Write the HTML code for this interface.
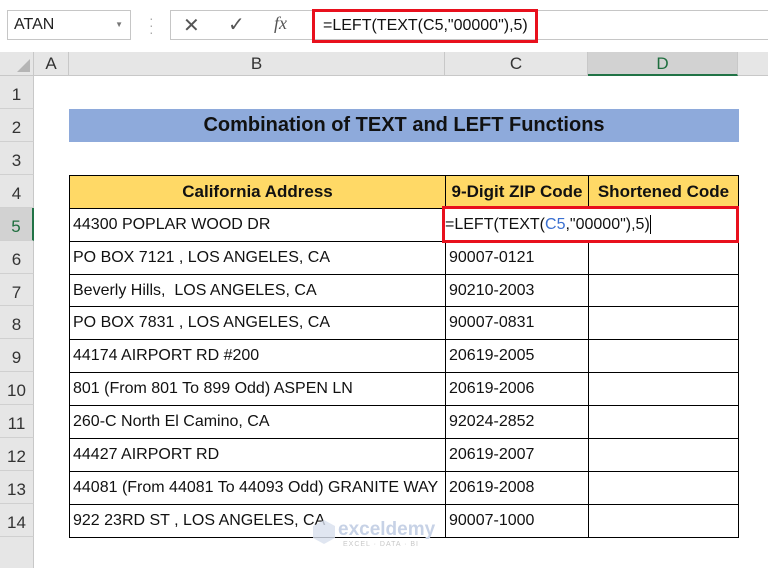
<!DOCTYPE html>
<html><head><meta charset="utf-8"><style>
*{margin:0;padding:0;box-sizing:border-box}
body{width:768px;height:568px;overflow:hidden;background:#fff;font-family:"Liberation Sans",sans-serif;position:relative}
.a{position:absolute}
.rh{position:absolute;left:0;width:34px;background:#e6e6e6;border-bottom:1px solid #d0d0d0;border-right:1px solid #c8c8c8;font-size:17px;color:#333;text-align:center;padding-top:9px}
.ch{position:absolute;top:52px;height:24px;background:#e6e6e6;border-right:1px solid #c8c8c8;border-bottom:1px solid #c8c8c8;font-size:17px;color:#333;text-align:center;line-height:24px}
.cell{position:absolute;border:1px solid #000;font-size:16px;color:#111;padding-left:3px;display:flex;align-items:center;white-space:nowrap}
.hd{font-weight:bold;justify-content:center;padding-left:0;background:#ffd966;font-size:17px}
</style></head><body>
<div class="a" style="left:7px;top:10px;width:124px;height:30px;border:1px solid #c6c6c6;font-size:16px;line-height:28px;padding-left:6px;color:#222">ATAN<span style="position:absolute;right:7px;top:0;font-size:8px;color:#777">▼</span></div>
<div class="a" style="left:149px;top:15px;color:#aaa;font-size:14px;line-height:7px">·<br>·<br>·</div>
<div class="a" style="left:170px;top:10px;width:598px;height:30px;border:1px solid #c6c6c6;border-right:none"></div>
<div class="a" style="left:183px;top:13px;font-size:20px;color:#555">✕</div>
<div class="a" style="left:228px;top:12px;font-size:20px;color:#555">✓</div>
<div class="a" style="left:274px;top:13px;font-size:18px;color:#555;font-style:italic;font-family:'Liberation Serif',serif">fx</div>
<div class="a" style="left:312px;top:9px;width:226px;height:34px;border:3px solid #e8101d;font-size:16px;line-height:28px;padding-left:8px;color:#111">=LEFT(TEXT(C5,"00000"),5)</div>
<div class="ch" style="left:0;width:34px"><div style="position:absolute;right:3px;bottom:3px;width:0;height:0;border-left:13px solid transparent;border-bottom:13px solid #b5b5b5"></div></div>
<div class="ch" style="left:34px;width:35px">A</div>
<div class="ch" style="left:69px;width:376px">B</div>
<div class="ch" style="left:445px;width:143px">C</div>
<div class="ch" style="left:588px;width:150px;background:#d2d2d2;color:#1e6e3e;border-bottom:2px solid #217346">D</div>
<div class="ch" style="left:738px;width:30px;border-right:none"></div>
<div class="rh" style="top:76px;height:33px">1</div>
<div class="rh" style="top:109px;height:33px">2</div>
<div class="rh" style="top:142px;height:33px">3</div>
<div class="rh" style="top:175px;height:33px">4</div>
<div class="rh" style="top:208px;height:33px;background:#d2d2d2;color:#1e6e3e;border-right:2px solid #217346">5</div>
<div class="rh" style="top:241px;height:33px">6</div>
<div class="rh" style="top:274px;height:32px">7</div>
<div class="rh" style="top:306px;height:33px">8</div>
<div class="rh" style="top:339px;height:33px">9</div>
<div class="rh" style="top:372px;height:33px">10</div>
<div class="rh" style="top:405px;height:33px">11</div>
<div class="rh" style="top:438px;height:33px">12</div>
<div class="rh" style="top:471px;height:33px">13</div>
<div class="rh" style="top:504px;height:33px">14</div>
<div class="rh" style="top:537px;height:31px;border-bottom:none"></div>
<div class="a" style="left:69px;top:109px;width:670px;height:33px;background:#8eaadb;font-weight:bold;font-size:20px;text-align:center;line-height:33px;color:#111">Combination of TEXT and LEFT Functions</div>
<div class="cell hd" style="left:69px;top:175px;width:377px;height:34px">California Address</div>
<div class="cell hd" style="left:445px;top:175px;width:144px;height:34px">9-Digit ZIP Code</div>
<div class="cell hd" style="left:588px;top:175px;width:151px;height:34px">Shortened Code</div>
<div class="cell" style="left:69px;top:208px;width:377px;height:34px">44300 POPLAR WOOD DR</div>
<div class="cell" style="left:445px;top:208px;width:144px;height:34px"></div>
<div class="cell" style="left:588px;top:208px;width:151px;height:34px"></div>
<div class="cell" style="left:69px;top:241px;width:377px;height:34px">PO BOX 7121 , LOS ANGELES, CA</div>
<div class="cell" style="left:445px;top:241px;width:144px;height:34px">90007-0121</div>
<div class="cell" style="left:588px;top:241px;width:151px;height:34px"></div>
<div class="cell" style="left:69px;top:274px;width:377px;height:33px">Beverly Hills,&nbsp; LOS ANGELES, CA</div>
<div class="cell" style="left:445px;top:274px;width:144px;height:33px">90210-2003</div>
<div class="cell" style="left:588px;top:274px;width:151px;height:33px"></div>
<div class="cell" style="left:69px;top:306px;width:377px;height:34px">PO BOX 7831 , LOS ANGELES, CA</div>
<div class="cell" style="left:445px;top:306px;width:144px;height:34px">90007-0831</div>
<div class="cell" style="left:588px;top:306px;width:151px;height:34px"></div>
<div class="cell" style="left:69px;top:339px;width:377px;height:34px">44174 AIRPORT RD #200</div>
<div class="cell" style="left:445px;top:339px;width:144px;height:34px">20619-2005</div>
<div class="cell" style="left:588px;top:339px;width:151px;height:34px"></div>
<div class="cell" style="left:69px;top:372px;width:377px;height:34px">801 (From 801 To 899 Odd) ASPEN LN</div>
<div class="cell" style="left:445px;top:372px;width:144px;height:34px">20619-2006</div>
<div class="cell" style="left:588px;top:372px;width:151px;height:34px"></div>
<div class="cell" style="left:69px;top:405px;width:377px;height:34px">260-C North El Camino, CA</div>
<div class="cell" style="left:445px;top:405px;width:144px;height:34px">92024-2852</div>
<div class="cell" style="left:588px;top:405px;width:151px;height:34px"></div>
<div class="cell" style="left:69px;top:438px;width:377px;height:34px">44427 AIRPORT RD</div>
<div class="cell" style="left:445px;top:438px;width:144px;height:34px">20619-2007</div>
<div class="cell" style="left:588px;top:438px;width:151px;height:34px"></div>
<div class="cell" style="left:69px;top:471px;width:377px;height:34px">44081 (From 44081 To 44093 Odd) GRANITE WAY</div>
<div class="cell" style="left:445px;top:471px;width:144px;height:34px">20619-2008</div>
<div class="cell" style="left:588px;top:471px;width:151px;height:34px"></div>
<div class="cell" style="left:69px;top:504px;width:377px;height:34px">922 23RD ST , LOS ANGELES, CA</div>
<div class="cell" style="left:445px;top:504px;width:144px;height:34px">90007-1000</div>
<div class="cell" style="left:588px;top:504px;width:151px;height:34px"></div>
<div class="a" style="left:442px;top:206px;width:297px;height:37px;border:3px solid #e8101d;background:#fff;font-size:16px;line-height:31px;padding-left:0px;color:#111;white-space:nowrap">=LEFT(TEXT(<span style="color:#3a6fd0">C5</span>,"00000"),5)<span style="display:inline-block;width:1px;height:19px;background:#000;vertical-align:middle"></span></div>
<div class="a" style="left:313px;top:520px;width:22px;height:24px;background:#d8e0ee;opacity:.8;clip-path:polygon(50% 0,100% 25%,100% 75%,50% 100%,0 75%,0 25%)"></div>
<div class="a" style="left:338px;top:519px;font-size:19px;font-weight:bold;color:#c7d2e6">exceldemy</div>
<div class="a" style="left:343px;top:541px;font-size:7px;color:#c8c8c8;letter-spacing:1px">EXCEL · DATA · BI</div>
</body></html>
